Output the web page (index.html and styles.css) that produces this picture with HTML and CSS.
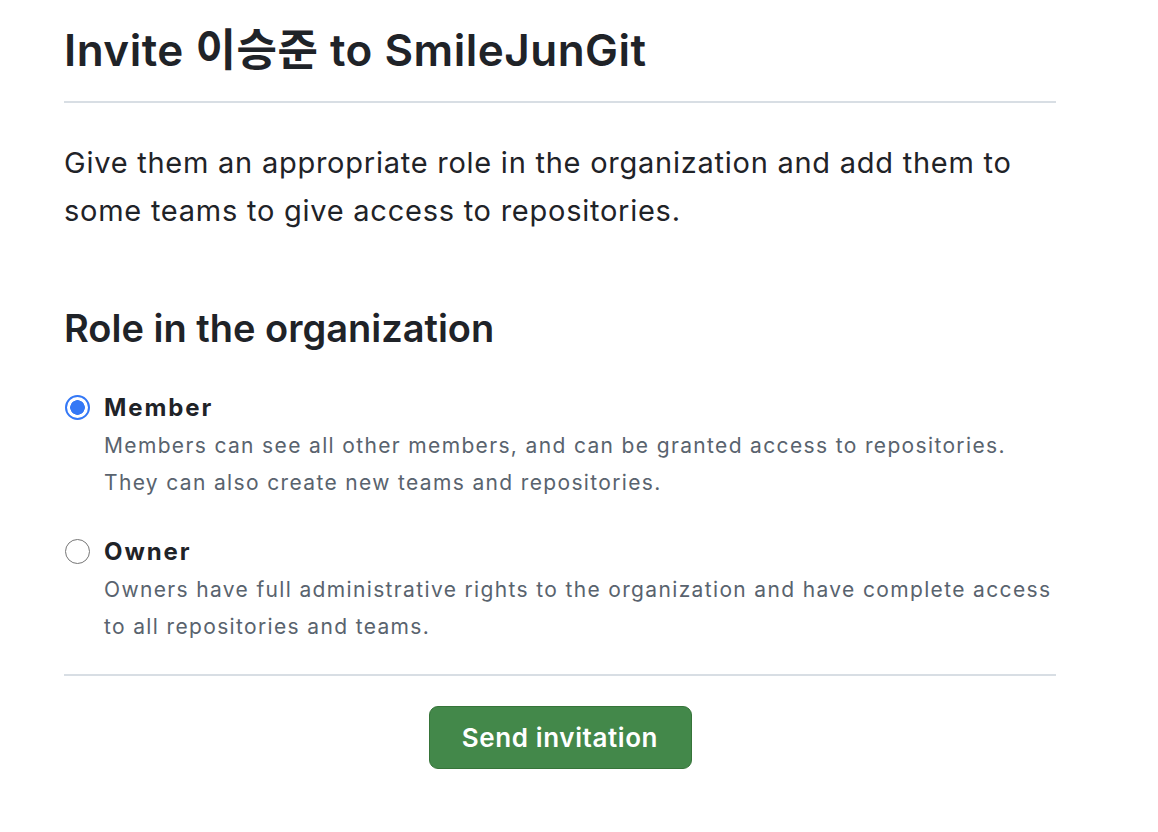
FILE: index.html
```html
<!DOCTYPE html>
<html lang="en">
<head>
<meta charset="utf-8">
<title>Invite</title>
<link rel="stylesheet" href="styles.css">
</head>
<body>
<main class="page">
  <h1 class="title">Invite 이승준 to SmileJunGit</h1>
  <p class="lead">Give them an appropriate role in the organization and add them to some teams to give access to repositories.</p>
  <h2 class="subtitle">Role in the organization</h2>
  <div class="options">
    <label class="option">
      <span class="radio checked"></span>
      <span class="option-body">
        <span class="option-title">Member</span>
        <span class="option-desc">Members can see all other members, and can be granted access to repositories. They can also create new teams and repositories.</span>
      </span>
    </label>
    <label class="option">
      <span class="radio"></span>
      <span class="option-body">
        <span class="option-title">Owner</span>
        <span class="option-desc">Owners have full administrative rights to the organization and have complete access to all repositories and teams.</span>
      </span>
    </label>
  </div>
  <div class="actions">
    <button class="btn-primary" type="button">Send invitation</button>
  </div>
</main>
</body>
</html>
```
FILE: styles.css
```css
* { box-sizing: border-box; }
html, body { margin: 0; padding: 0; background: #ffffff; }
body {
  font-family: Inter, "Noto Sans CJK KR", "Liberation Sans", sans-serif;
  color: #1f2328;
}
.page {
  width: 992px;
  margin-left: 64px;
  padding-top: 23px;
}
.title {
  margin: 0;
  font-size: 44px;
  font-weight: 600;
  line-height: 54px;
  letter-spacing: 0.5px;
  padding-bottom: 24px;
  border-bottom: 2px solid #d8dee4;
}
.lead {
  margin: 36px 0 0;
  font-size: 29px;
  line-height: 48px;
  letter-spacing: 0.75px;
  font-weight: 400;
}
.subtitle {
  margin: 66px 0 0;
  font-size: 38px;
  line-height: 54px;
  font-weight: 600;
}
.options {
  margin-top: 35px;
  padding-bottom: 29px;
  border-bottom: 2px solid #d8dee4;
  display: flex;
  flex-direction: column;
  gap: 33px;
}
.option {
  display: flex;
  gap: 14px;
}
.radio {
  flex: none;
  width: 25px;
  height: 25px;
  margin-top: 5px;
  margin-left: 1px;
  border-radius: 50%;
  border: 1.5px solid #767676;
  background: #fff;
}
.radio.checked {
  border: 2px solid #3478f6;
  background: radial-gradient(circle, #3478f6 0 7px, #fff 7.6px);
}
.option-body { display: flex; flex-direction: column; }
.option-title {
  font-size: 24px;
  font-weight: 700;
  line-height: 36px;
  letter-spacing: 1.9px;
}
.option-desc {
  margin-top: 1px;
  font-size: 21px;
  line-height: 37px;
  letter-spacing: 1.35px;
  color: #59636e;
}
.actions {
  display: flex;
  justify-content: center;
  padding-top: 30px;
}
.btn-primary {
  width: 263px;
  height: 63px;
  border-radius: 9px;
  border: 1.5px solid #367439;
  background: #43884a;
  color: #ffffff;
  font-family: inherit;
  font-size: 26px;
  font-weight: 600;
  letter-spacing: 0.6px;
}
```
